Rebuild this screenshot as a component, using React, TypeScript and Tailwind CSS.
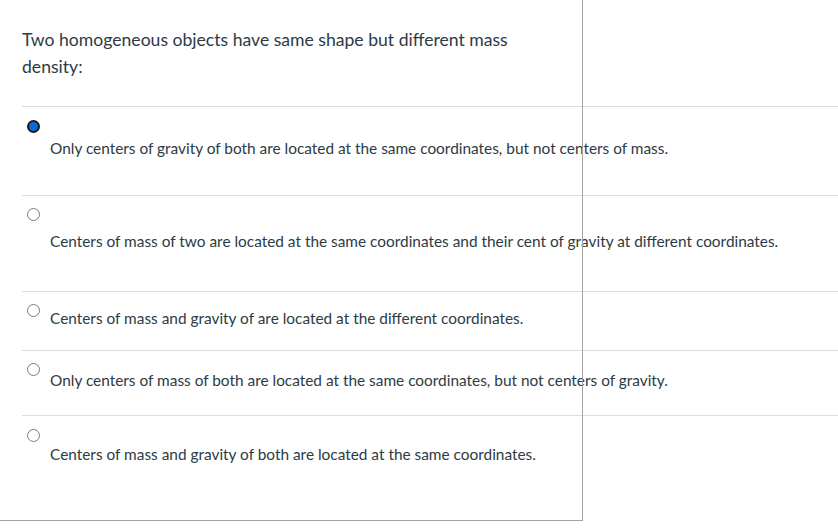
import React from "react"

type Answer = {
  text: string
  selected?: boolean
  inline?: boolean
  wrap: string
  label: string
}

const answers: Answer[] = [
  {
    text: "Only centers of gravity of both are located at the same coordinates, but not centers of mass.",
    selected: true,
    wrap: "pt-[13px] pb-[37px]",
    label: "mt-[5px]",
  },
  {
    text: "Centers of mass of two are located at the same coordinates and their cent of gravity at different coordinates.",
    wrap: "pt-[12px] pb-[40px]",
    label: "mt-[10px]",
  },
  {
    text: "Centers of mass and gravity of are located at the different coordinates.",
    inline: true,
    wrap: "pt-[12px] pb-[22px]",
    label: "mt-[4px]",
  },
  {
    text: "Only centers of mass of both are located at the same coordinates, but not centers of gravity.",
    inline: true,
    wrap: "pt-[12px] pb-[25px]",
    label: "mt-[7px]",
  },
  {
    text: "Centers of mass and gravity of both are located at the same coordinates.",
    wrap: "pt-[13px] pb-[20px]",
    label: "mt-[2px]",
  },
]

function Radio({ selected }: { selected?: boolean }) {
  if (selected) {
    return <span className="block h-[13px] w-[13px] shrink-0 rounded-full border-2 border-[#1b1b1b] bg-[#0a6ad6]" />
  }
  return <span className="block h-[13px] w-[13px] shrink-0 rounded-full border border-[#7a7a7a] bg-white" />
}

export default function App() {
  return (
    <div
      className="relative h-[529px] w-[838px] overflow-hidden bg-white text-[#2d3b45]"
      style={{ fontFamily: "Lato, 'Open Sans', sans-serif" }}
    >
      <div className="pl-[22px] pt-[26px]">
        <p className="max-w-[520px] text-[17.6px] leading-[27px]">
          Two homogeneous objects have same shape but different mass density:
        </p>
      </div>

      <div className="ml-[22px] mt-[26px]">
        {answers.map((a, i) => (
          <div key={i} className={`border-t border-[#dcdcdc] pl-[5px] ${a.wrap}`}>
            {a.inline ? (
              <div className="flex items-start gap-[10px]">
                <Radio selected={a.selected} />
                <span className={`text-[15.4px] leading-[20px] ${a.label}`}>{a.text}</span>
              </div>
            ) : (
              <div className="flex flex-col">
                <Radio selected={a.selected} />
                <span className={`ml-[23px] text-[15.4px] leading-[20px] ${a.label}`}>{a.text}</span>
              </div>
            )}
          </div>
        ))}
      </div>

      {/* crop frame drawn over the question */}
      <div className="pointer-events-none absolute left-0 top-0 h-[521px] w-[583px] border-b border-r border-[#a3a3a3]" />
    </div>
  )
}
